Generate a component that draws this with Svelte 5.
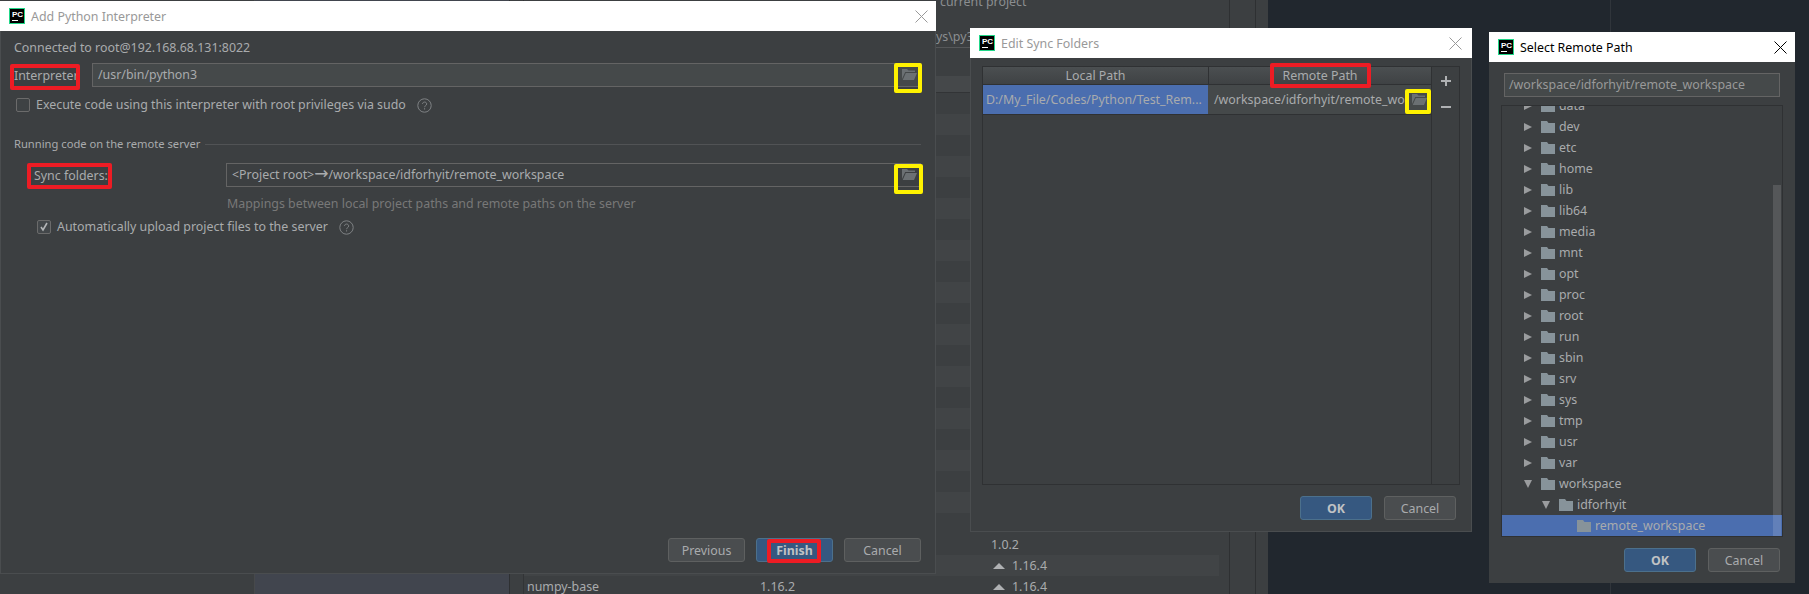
<script>
  const rootDirs = ['data', 'dev', 'etc', 'home', 'lib', 'lib64', 'media', 'mnt', 'opt', 'proc', 'root', 'run', 'sbin', 'srv', 'sys', 'tmp', 'usr', 'var'];

  // rows of the package table behind the dialogs, y = 93 onward
  const pkgRows = [];
  for (let i = 0; i < 24; i++) {
    pkgRows.push({ light: i < 20 ? i % 2 === 1 : i === 22 });
  }
  pkgRows[21] = { light: false, version: '', latest: '1.0.2' };
  pkgRows[22] = { light: true, version: '', latest: '1.16.4', up: true };
  pkgRows[23] = { light: false, name: 'numpy-base', version: '1.16.2', latest: '1.16.4', up: true };
</script>

{#snippet logo()}
  <span class="logo"><span class="logo-pc">PC</span><span class="logo-bar"></span></span>
{/snippet}

{#snippet closeIcon()}
  <svg class="close" width="13" height="13" viewBox="0 0 13 13"><path d="M.5.5l12 12M12.5.5l-12 12" stroke="currentColor" fill="none" /></svg>
{/snippet}

{#snippet openFolder()}
  <svg width="15" height="11" viewBox="0 0 15 11"><path d="M0 0h5l1.5 1.5H13V3H3.2L0 10z M3.8 4H15l-3 7H.7z" fill="#6b7073" /></svg>
{/snippet}

{#snippet help()}
  <svg class="help" width="15" height="15" viewBox="0 0 15 15">
    <circle cx="7.5" cy="7.5" r="6.7" fill="none" stroke="#7f8284" />
    <path d="M5.5 6c0-2.6 4.2-2.6 4.2 0 0 1.7-2.1 1.5-2.1 3.2M7.6 10.2v1.3" fill="none" stroke="#7f8284" />
  </svg>
{/snippet}

{#snippet folder()}
  <svg class="folder" width="14" height="12" viewBox="0 0 14 12"><path d="M0 0h6l1.5 2H14v10H0z" fill="#87939a" /></svg>
{/snippet}

<div class="screen">
  <!-- dialog behind everything -->
  <div class="backdrop">
    <div class="bd-left"></div>
    <div class="bd-side"></div>
    <div class="bd-gap"></div>
    <div class="bd-main">
      <div class="bd-top">current project</div>
      <div class="bd-path">ys\py3</div>
      <div class="bd-head"></div>
      {#each pkgRows as row}
        <div class="bd-row" class:light={row.light}>
          <span class="c-name">{row.name ?? ''}</span>
          <span class="c-ver">{row.version ?? ''}</span>
          <span class="c-latest">
            {#if row.up}<i class="up"></i>{/if}{row.latest ?? ''}
          </span>
        </div>
      {/each}
    </div>
    <div class="bd-col"></div>
    <div class="bd-col last"></div>
  </div>
  <div class="desk-line"></div>

  <!-- Add Python Interpreter -->
  <section class="win win-add">
    <header class="title inactive">
      {@render logo()}
      <span>Add Python Interpreter</span>
      {@render closeIcon()}
    </header>
    <div class="add-body">
      <p class="connected">Connected to root@192.168.68.131:8022</p>
      <div class="field-row">
        <label class="lbl-interp">Interpreter</label>
        <div class="field filled">/usr/bin/python3<span class="browse">{@render openFolder()}</span></div>
      </div>
      <div class="check-row first">
        <span class="check"></span>
        <span>Execute code using this interpreter with root privileges via sudo</span>
        {@render help()}
      </div>
      <div class="sep">
        <span>Running code on the remote server</span><i></i>
      </div>
      <div class="field-row sync">
        <label class="lbl-sync">Sync folders:</label>
        <div class="field">&lt;Project root&gt;<span class="arrow-glyph">→</span>/workspace/idforhyit/remote_workspace<span class="browse">{@render openFolder()}</span></div>
      </div>
      <p class="hint">Mappings between local project paths and remote paths on the server</p>
      <div class="check-row second">
        <span class="check on">
          <svg width="10" height="10" viewBox="0 0 10 10"><path d="M2 5l2 3 4-7" fill="none" stroke="#b4b6b8" stroke-width="1.6" /></svg>
        </span>
        <span>Automatically upload project files to the server</span>
        {@render help()}
      </div>
      <div class="buttons">
        <button>Previous</button>
        <button class="primary">Finish</button>
        <button>Cancel</button>
      </div>
    </div>
    <span class="mark red" style="left:9px;top:63px;width:70px;height:26px"></span>
    <span class="mark yellow" style="left:893px;top:62px;width:28px;height:30px"></span>
    <span class="mark red" style="left:26px;top:162px;width:85px;height:26px"></span>
    <span class="mark yellow" style="left:893px;top:163px;width:29px;height:30px"></span>
    <span class="mark red" style="left:766px;top:538px;width:54px;height:24px"></span>
  </section>

  <!-- Edit Sync Folders -->
  <section class="win win-sync">
    <header class="title inactive">
      {@render logo()}
      <span>Edit Sync Folders</span>
      {@render closeIcon()}
    </header>
    <div class="sync-body">
      <div class="sync-table">
        <div class="sync-main">
          <div class="thead">
            <span class="t-local">Local Path</span>
            <span class="t-remote">Remote Path</span>
          </div>
          <div class="trow">
            <span class="t-local sel">D:/My_File/Codes/Python/Test_Rem...</span>
            <span class="t-remote cell">/workspace/idforhyit/remote_workspace<span class="cell-btn">{@render openFolder()}</span></span>
          </div>
        </div>
        <div class="sync-tools">
          <svg width="12" height="12" viewBox="0 0 12 12"><path d="M6 1v10M1 6h10" stroke="#afb1b3" stroke-width="2" /></svg>
          <svg width="12" height="12" viewBox="0 0 12 12"><path d="M1 6h10" stroke="#afb1b3" stroke-width="2" /></svg>
        </div>
      </div>
      <div class="buttons tight">
        <button class="primary">OK</button>
        <button>Cancel</button>
      </div>
    </div>
    <span class="mark red" style="left:299px;top:35px;width:101px;height:25px"></span>
    <span class="mark yellow" style="left:434px;top:61px;width:26px;height:25px"></span>
  </section>

  <!-- Select Remote Path -->
  <section class="win win-path">
    <header class="title">
      {@render logo()}
      <span>Select Remote Path</span>
      {@render closeIcon()}
    </header>
    <div class="path-body">
      <div class="path-input">/workspace/idforhyit/remote_workspace</div>
      <div class="tree">
        <div class="tree-rows">
          {#each rootDirs as dir}
            <div class="node">
              <i class="arrow"></i>{@render folder()}<span>{dir}</span>
            </div>
          {/each}
          <div class="node">
            <i class="arrow down"></i>{@render folder()}<span>workspace</span>
          </div>
          <div class="node lvl1">
            <i class="arrow down"></i>{@render folder()}<span>idforhyit</span>
          </div>
          <div class="node lvl2 selected">{@render folder()}<span>remote_workspace</span></div>
        </div>
        <div class="scroll"></div>
      </div>
      <div class="buttons tight">
        <button class="primary">OK</button>
        <button>Cancel</button>
      </div>
    </div>
  </section>
</div>

<style>
  :global(body) {
    margin: 0;
    background: #21272e;
  }

  .screen {
    position: relative;
    width: 1809px;
    height: 594px;
    overflow: hidden;
    background: #21272e;
    font-family: 'Noto Sans', sans-serif;
    font-size: 12.4px;
    color: #a9abad;
  }

  /* background dialog */
  .backdrop {
    position: absolute;
    left: 0;
    top: 0;
    width: 1268px;
    height: 594px;
    display: flex;
    background: #3c3f41;
  }

  .bd-left {
    width: 254px;
  }

  .bd-side {
    width: 256px;
    background: #41454e;
    border-left: 1px solid #47494b;
    border-right: 1px solid #2e3032;
    box-sizing: border-box;
  }

  .bd-gap {
    width: 14px;
    border-right: 1px solid #323436;
    box-sizing: border-box;
  }

  .bd-main {
    width: 695px;
    overflow: hidden;
  }

  .bd-top {
    height: 26px;
    margin-top: -6px;
    padding-left: 416px;
    line-height: 16px;
    color: #8b8e90;
    box-sizing: border-box;
  }

  .bd-path {
    height: 18px;
    padding: 8px 0 1px 412px;
    border-bottom: 1px solid #555759;
    line-height: 18px;
    color: #8b8e90;
  }

  .bd-head {
    height: 16px;
    margin-top: 28px;
    background: #45484a;
    border-bottom: 1px solid #323436;
  }

  .bd-row {
    height: 21px;
    line-height: 21px;
    display: flex;
  }

  .bd-row.light {
    background: #414446;
  }

  .c-name {
    width: 236px;
    padding-left: 3px;
    box-sizing: border-box;
  }

  .c-ver {
    width: 231px;
  }

  .c-latest {
    display: flex;
    align-items: center;
  }

  .up {
    width: 0;
    height: 0;
    border-left: 6px solid transparent;
    border-right: 6px solid transparent;
    border-bottom: 6px solid #afb1b3;
    margin-left: 2px;
    margin-right: 7px;
  }

  .bd-col {
    width: 10px;
    border-right: 1px solid #2e3032;
  }

  .bd-col.last {
    width: 26px;
    border-right: 1px solid #2e3032;
    box-sizing: border-box;
  }

  .desk-line {
    position: absolute;
    left: 1610px;
    top: 0;
    width: 1px;
    height: 594px;
    background: #30353b;
  }

  /* windows */
  .win {
    position: absolute;
    display: flex;
    flex-direction: column;
    background: #3c3f41;
    box-sizing: border-box;
    border: 1px solid #4a4d4f;
    border-top: none;
  }

  .win-add {
    left: 0;
    top: 1px;
    width: 936px;
    height: 573px;
  }

  .win-sync {
    left: 970px;
    top: 28px;
    width: 502px;
    height: 504px;
  }

  .win-path {
    left: 1489px;
    top: 32px;
    width: 306px;
    height: 551px;
    border: none;
  }

  .title {
    flex: none;
    height: 30px;
    background: #fff;
    display: flex;
    align-items: center;
    padding: 0 8px 0 9px;
    gap: 6px;
    color: #000;
    margin: 0 -1px;
  }

  .win-path .title {
    margin: 0;
  }

  .title.inactive {
    color: #999;
  }

  .close {
    margin-left: auto;
    margin-right: 0;
  }

  .win-sync .close {
    margin-right: 2px;
  }

  .logo {
    position: relative;
    display: block;
    width: 16px;
    height: 16px;
    box-sizing: border-box;
    background: #000;
    border: 1px solid #21d789;
    flex: none;
  }

  .logo-pc {
    display: block;
    font-family: 'Liberation Sans', sans-serif;
    font-weight: 700;
    font-size: 8px;
    line-height: 9px;
    padding: 1px 0 0 2px;
    color: #fff;
  }

  .logo-bar {
    position: absolute;
    left: 2px;
    bottom: 2px;
    width: 6px;
    height: 1px;
    background: #fff;
  }

  .mark {
    position: absolute;
    box-sizing: border-box;
    border-radius: 2px;
    pointer-events: none;
  }

  .mark.red {
    border: 4px solid #ed1c24;
  }

  .mark.yellow {
    border: 4px solid #fff200;
  }

  .buttons {
    display: flex;
    justify-content: flex-end;
    gap: 11px;
    margin-top: auto;
  }

  button {
    width: 77px;
    height: 24px;
    padding: 0;
    font: inherit;
    color: #a9abad;
    background: #4a4d4f;
    border: 1px solid #5e6060;
    border-radius: 3px;
  }

  button.primary {
    background: #365880;
    border-color: #4c708c;
    font-weight: 700;
    color: #c0c2c4;
  }

  .buttons.tight button {
    width: 72px;
  }

  .buttons.tight {
    gap: 12px;
  }

  /* add interpreter body */
  .add-body {
    flex: 1;
    display: flex;
    flex-direction: column;
    padding: 8px 14px 11px 13px;
    min-height: 0;
  }

  .connected {
    margin: 0;
    line-height: 18px;
  }

  .field-row {
    display: flex;
    align-items: center;
    margin-top: 6px;
  }

  .field-row label {
    width: 78px;
    flex: none;
  }

  .field-row.sync {
    margin-top: 10px;
    padding-left: 20px;
  }

  .field-row.sync label {
    width: 192px;
  }

  .field {
    flex: 1;
    height: 24px;
    line-height: 22px;
    box-sizing: border-box;
    padding-left: 5px;
    border-top: 1px solid #646464;
    border-bottom: 1px solid #646464;
    border-left: 1px solid #646464;
    position: relative;
  }

  .field.filled {
    background: #45494a;
  }

  .arrow-glyph {
    font-family: 'DejaVu Sans', sans-serif;
    font-size: 17px;
    line-height: 0;
  }

  .browse {
    position: absolute;
    right: 4px;
    top: 5px;
    line-height: 0;
  }

  .check-row {
    display: flex;
    align-items: center;
    gap: 6px;
    line-height: 18px;
  }

  .check-row.first {
    margin-top: 9px;
    padding-left: 2px;
  }

  .check-row.second {
    margin-top: 5px;
    padding-left: 23px;
  }

  .check {
    width: 14px;
    height: 14px;
    box-sizing: border-box;
    background: #3e4244;
    border: 1px solid #6b6b6b;
    border-radius: 2px;
    display: flex;
    align-items: center;
    justify-content: center;
    flex: none;
  }

  .check.on {
    background: #43474a;
  }

  .help {
    margin-left: 5px;
  }

  .sep {
    display: flex;
    align-items: center;
    gap: 5px;
    margin-top: 21px;
    font-size: 11.2px;
    line-height: 18px;
  }

  .sep i {
    flex: 1;
    height: 1px;
    background: #515355;
  }

  .hint {
    margin: 8px 0 0 213px;
    line-height: 18px;
    color: #787878;
  }

  /* sync folders body */
  .sync-body {
    flex: 1;
    min-height: 0;
    display: flex;
    flex-direction: column;
    padding: 8px 15px 11px 11px;
  }

  .sync-table {
    flex: none;
    height: 419px;
    margin-right: -4px;
    display: flex;
    border: 1px solid #2f3133;
    box-sizing: border-box;
  }

  .sync-main {
    flex: 1;
    min-width: 0;
    border-right: 1px solid #2f3133;
  }

  .thead {
    height: 17px;
    display: flex;
    background: linear-gradient(#4b4f51, #3f4244);
    border-bottom: 1px solid #2f3133;
    line-height: 17px;
    text-align: center;
  }

  .t-local {
    width: 225px;
    flex: none;
  }

  .thead .t-local {
    border-right: 1px solid #2f3133;
  }

  .t-remote {
    flex: 1;
    min-width: 0;
  }

  .trow {
    display: flex;
    height: 29px;
    line-height: 29px;
    border-bottom: 1px solid #2f3133;
    white-space: nowrap;
    overflow: hidden;
  }

  .sel {
    background: #4b6eaf;
    padding-left: 3px;
    box-sizing: border-box;
    overflow: hidden;
  }

  .cell {
    position: relative;
    background: #45494a;
    padding-left: 6px;
    overflow: hidden;
  }

  .cell-btn {
    position: absolute;
    right: 0;
    top: 0;
    bottom: 0;
    width: 24px;
    display: flex;
    align-items: center;
    justify-content: center;
    background: #45494a;
  }

  .sync-tools {
    flex: none;
    width: 27px;
    display: flex;
    flex-direction: column;
    align-items: center;
    gap: 14px;
    padding-top: 8px;
  }

  /* remote path body */
  .path-body {
    flex: 1;
    min-height: 0;
    display: flex;
    flex-direction: column;
    padding: 11px 15px 11px 12px;
  }

  .path-input {
    height: 24px;
    line-height: 22px;
    box-sizing: border-box;
    margin-left: 3px;
    padding-left: 4px;
    border: 1px solid #646464;
    background: #45494a;
    color: #999;
  }

  .tree {
    position: relative;
    height: 432px;
    margin-top: 8px;
    margin-right: -3px;
    box-sizing: border-box;
    border: 1px solid #2f3133;
    overflow: hidden;
  }

  .tree-rows {
    margin-top: -11px;
  }

  .node {
    height: 21px;
    line-height: 21px;
    display: flex;
    align-items: center;
    padding-left: 22px;
  }

  .node.lvl1 {
    padding-left: 40px;
  }

  .node.lvl2 {
    padding-left: 75px;
  }

  .selected {
    background: #4b6eaf;
  }

  .arrow {
    width: 0;
    height: 0;
    border-left: 8px solid #9a9c9e;
    border-top: 4.5px solid transparent;
    border-bottom: 4.5px solid transparent;
    margin-right: 9px;
    flex: none;
  }

  .arrow.down {
    border-left: 4.5px solid transparent;
    border-right: 4.5px solid transparent;
    border-top: 8px solid #9a9c9e;
    border-bottom: none;
    margin-right: 9px;
  }

  .folder {
    margin-right: 4px;
    flex: none;
  }

  .scroll {
    position: absolute;
    right: 1px;
    top: 79px;
    bottom: 0;
    width: 8px;
    background: rgba(255, 255, 255, 0.13);
  }
</style>
